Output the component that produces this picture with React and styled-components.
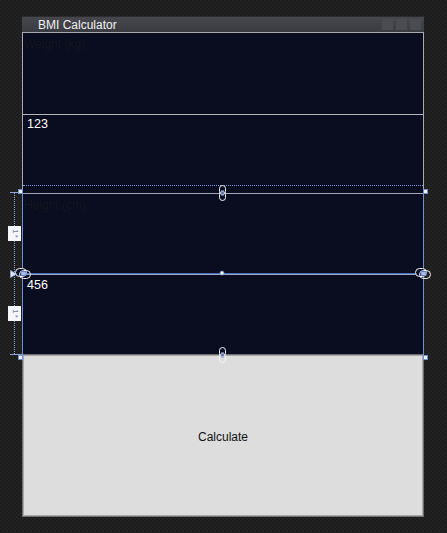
import React from "react";
import styled, { createGlobalStyle } from "styled-components";

const Global = createGlobalStyle`
  html, body { margin: 0; padding: 0; }
  body {
    width: 447px; height: 533px; overflow: hidden;
    background: repeating-conic-gradient(#1c1c1c 0 25%, #232323 0 50%) 0 0 / 4px 4px;
    font-family: "Liberation Sans", Arial, sans-serif;
  }
`;

const Page = styled.div`
  padding: 16px 0 0 22px;
`;

const Window = styled.div`
  position: relative;
  width: 402px;
  display: flex;
  flex-direction: column;
`;

const TitleBar = styled.div`
  height: 16px;
  display: flex;
  align-items: center;
  padding-left: 16px;
  background: linear-gradient(#46474d, #3b3c42);
  border-top: 1px solid #2c2c2e;
  box-sizing: border-box;
`;

const Title = styled.span`
  flex: 1;
  color: #f2f2f2;
  font-size: 12px;
  line-height: 14px;
  padding-top: 1px;
`;

const Buttons = styled.div`
  display: flex;
  gap: 3px;
  padding-right: 3px;
`;

const CapButton = styled.div`
  width: 11px;
  height: 11px;
  background: #4b4c52;
`;

const Content = styled.div`
  display: grid;
  grid-template-rows: 82px 79px 80px 81px 163px;
  background: #0a0c20;
  border-left: 1px solid #a9a9ae;
  border-right: 1px solid #a9a9ae;
`;

const Label = styled.div`
  box-sizing: border-box;
  border-top: 1px solid ${(p) => p.$line};
  padding: 4px 0 0 1px;
  color: #14151c;
  font-size: 12px;
`;

const TextBox = styled.div`
  box-sizing: border-box;
  border-top: 1px solid ${(p) => p.$line};
  box-shadow: ${(p) => (p.$double ? "inset 0 1px 0 #9ea6ba" : "none")};
  padding: ${(p) => (p.$double ? "4px" : "2px")} 0 0 4px;
  color: #ffffff;
  font-size: 12.5px;
`;

const CalcButton = styled.div`
  display: flex;
  align-items: center;
  justify-content: center;
  background: #dddddd;
  border: 1px solid #6f6f6f;
  box-shadow: inset 0 0 0 1px #a8a8a8;
  margin: 0 -1px;
  color: #111;
  font-size: 12px;
  padding-top: 2px;
`;

/* designer adornments overlaying the window */
const Frame = styled.div`
  position: absolute;
  left: 0;
  top: 174px;
  width: 402px;
  height: 166px;
  box-sizing: border-box;
  border-left: 1px solid #6d8fd8;
  border-right: 1px solid #6d8fd8;
  pointer-events: none;
`;

const HLine = styled.div`
  position: absolute;
  left: ${(p) => p.$x}px;
  top: ${(p) => p.$y}px;
  width: ${(p) => p.$w}px;
  border-top: 1px ${(p) => (p.$dotted ? "dotted" : "solid")} ${(p) => p.$c};
`;

const VRail = styled.div`
  position: absolute;
  left: -8px;
  top: 176px;
  height: 162px;
  border-left: 1px dotted #8fa6d8;
`;

const StarBox = styled.div`
  position: absolute;
  left: -14px;
  top: ${(p) => p.$y}px;
  width: 13px;
  height: 15px;
  background: #f4f6fb;
  display: flex;
  align-items: center;
  justify-content: center;
`;

const StarText = styled.span`
  display: block;
  transform: rotate(90deg);
  font-size: 8px;
  line-height: 8px;
  color: #6f7f9f;
  letter-spacing: 1px;
`;

const Handle = styled.div`
  position: absolute;
  left: ${(p) => p.$x}px;
  top: ${(p) => p.$y}px;
  width: 5px;
  height: 5px;
  box-sizing: border-box;
  background: #eef3fd;
  border: 1px solid #6d8fd8;
`;

const Adorn = styled.svg`
  position: absolute;
  left: ${(p) => p.$x}px;
  top: ${(p) => p.$y}px;
  overflow: visible;
`;

const VChain = ({ x, y }) => (
  <Adorn $x={x} $y={y} width="7" height="16" viewBox="0 0 7 16">
    <rect x="0.5" y="0.5" width="6" height="9" rx="3" fill="#0b0e22" stroke="#f2f4fa" />
    <rect x="0.5" y="6.5" width="6" height="9" rx="3" fill="none" stroke="#f2f4fa" />
    <rect x="2" y="5" width="3" height="6" fill="#8aa4dc" opacity="0.6" />
  </Adorn>
);

const HChain = ({ x, y }) => (
  <Adorn $x={x} $y={y} width="16" height="11" viewBox="0 0 16 11">
    <rect x="0.5" y="0.5" width="11" height="8" rx="4" fill="#0b0e22" stroke="#f2f4fa" />
    <rect x="4.5" y="2.5" width="11" height="8" rx="4" fill="none" stroke="#f2f4fa" />
    <rect x="6" y="3.5" width="5" height="4" fill="#a9bde6" stroke="#5f82cf" strokeWidth="0.8" />
  </Adorn>
);

const Arrow = () => (
  <Adorn $x={-12} $y={254} width="7" height="8" viewBox="0 0 7 8">
    <path d="M0.5 0.5 L6.5 4 L0.5 7.5 Z" fill="#dfe7f8" stroke="#8fa6d8" strokeWidth="0.8" />
  </Adorn>
);

const Dot = () => (
  <Adorn $x={197} $y={254} width="6" height="6" viewBox="0 0 6 6">
    <circle cx="3" cy="3" r="2.6" fill="#5f82cf" opacity="0.6" />
    <circle cx="3" cy="3" r="1.7" fill="#f2f6ff" />
  </Adorn>
);

export default function App() {
  return (
    <>
      <Global />
      <Page>
        <Window>
          <TitleBar>
            <Title>BMI Calculator</Title>
            <Buttons>
              <CapButton />
              <CapButton />
              <CapButton />
            </Buttons>
          </TitleBar>
          <Content>
            <Label $line="#a9a9ae">Weight (kg)</Label>
            <TextBox $line="#b6b6bb">123</TextBox>
            <Label $line="#a3a8b6">Height (cm)</Label>
            <TextBox $line="#4a70c8" $double>456</TextBox>
            <CalcButton>Calculate</CalcButton>
          </Content>

          <Frame />
          <HLine $x={1} $y={169} $w={400} $c="#7d9be0" $dotted />
          <HLine $x={-12} $y={176} $w={12} $c="#8fa6d8" />
          <HLine $x={-12} $y={338} $w={12} $c="#8fa6d8" />
          <VRail />
          <StarBox $y={210}><StarText>1*</StarText></StarBox>
          <StarBox $y={290}><StarText>1*</StarText></StarBox>
          <Handle $x={-4} $y={173} />
          <Handle $x={401} $y={173} />
          <Handle $x={-4} $y={339} />
          <Handle $x={401} $y={339} />
          <Arrow />
          <HChain x={-7} y={252} />
          <HChain x={393} y={252} />
          <VChain x={197} y={169} />
          <VChain x={197} y={331} />
          <Dot />
        </Window>
      </Page>
    </>
  );
}
